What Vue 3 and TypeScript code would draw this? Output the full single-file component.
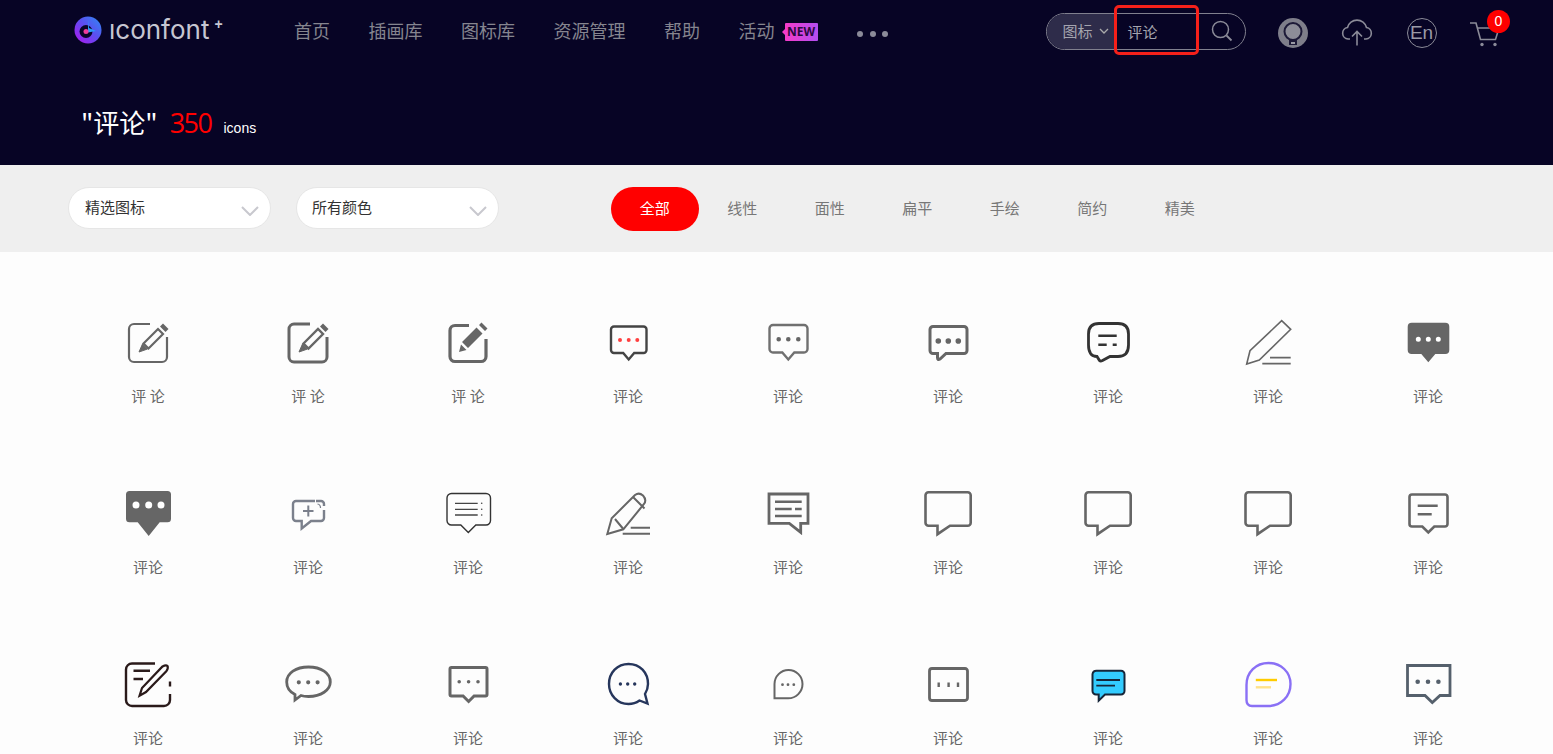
<script setup lang="ts">
interface Shape {
  d: string
  s?: string
  w?: number
  f?: string
}
interface Icon {
  label?: string
  shapes: Shape[]
}

const navItems = ['首页', '插画库', '图标库', '资源管理', '帮助']
const tabs = ['全部', '线性', '面性', '扁平', '手绘', '简约', '精美']

function dot(x: number, y: number, r: number) {
  return `M${x - r} ${y}a${r} ${r} 0 1 0 ${r * 2} 0a${r} ${r} 0 1 0 ${-r * 2} 0Z`
}
function dots(xs: number[], y: number, r: number, f: string): Shape {
  return { d: xs.map((x) => dot(x, y, r)).join(''), f, s: 'none', w: 0 }
}
function bubble(x1: number, y1: number, x2: number, y2: number, r: number, tx: number, tw: number, ty: number) {
  return `M${x1 + r} ${y1}H${x2 - r}a${r} ${r} 0 0 1 ${r} ${r}V${y2 - r}a${r} ${r} 0 0 1 ${-r} ${r}H${tx + tw}L${tx} ${ty}L${tx - tw} ${y2}H${x1 + r}a${r} ${r} 0 0 1 ${-r} ${-r}V${y1 + r}a${r} ${r} 0 0 1 ${r} ${-r}Z`
}
// tail sits on the left, pointing straight down
function speech(x1: number, x2: number, y1: number, y2: number) {
  const r = 3
  return `M${x1 + r} ${y1}H${x2 - r}a${r} ${r} 0 0 1 ${r} ${r}V${y2 - r}a${r} ${r} 0 0 1 ${-r} ${r}H32L${x1 + 12} ${y2 + 8.5}V${y2}H${x1 + r}a${r} ${r} 0 0 1 ${-r} ${-r}V${y1 + r}a${r} ${r} 0 0 1 ${r} ${-r}Z`
}
const frame = 'M32 11H16a5 5 0 0 0-5 5v28a5 5 0 0 0 5 5h28a5 5 0 0 0 5-5V24'
const cap = 'M42 13.500L45 10.500l5.500 5.500-3 3Z'

const icons: Icon[] = [
  { label: '评 论', shapes: [
    { d: frame, w: 2.200 },
    { d: 'M25.500 30.500L40 16l5 5-14.500 14.500Z', w: 2.200 },
    { d: 'M21 39l3.500-8 5 5Z', f: '#666', w: 1 },
    { d: cap, f: '#666', w: 0 },
  ] },
  { label: '评 论', shapes: [
    { d: frame, w: 3 },
    { d: 'M25.500 30.500L40 16l5 5-14.500 14.500Z', w: 2.400 },
    { d: 'M21 39l3.500-8 5 5Z', f: '#666', w: 1 },
    { d: cap, f: '#666', w: 0 },
  ] },
  { label: '评 论', shapes: [
    { d: 'M31 12.500H17a5 5 0 0 0-5 5v26a5 5 0 0 0 5 5h26a5 5 0 0 0 5-5V26', w: 3.200 },
    { d: 'M24 29L38.500 14.500l6 6L30 35ZM21 39l2-7.500 5.500 5.500ZM41 12l2.500-2.500 6 6-2.500 2.500Z', f: '#666', w: 0 },
  ] },
  { shapes: [
    { d: bubble(13, 13.500, 48.500, 40, 3, 30.700, 5.500, 46.500), s: '#444', w: 2.400 },
    dots([22, 30.700, 39.300], 27, 2, '#ff4040'),
  ] },
  { shapes: [
    { d: bubble(11.500, 12, 49.500, 39.500, 3.500, 30.300, 6, 46.500), s: '#707070', w: 2.400 },
    dots([20.700, 30.300, 40.300], 26.300, 2.300, '#666'),
  ] },
  { shapes: [
    { d: 'M15 13.500H46a3 3 0 0 1 3 3V37.500a3 3 0 0 1-3 3H28l-6 5.500q-2.500 1.500-2.500-1.500V40.500H15a3 3 0 0 1-3-3V16.500a3 3 0 0 1 3-3Z', w: 3 },
    dots([20.300, 30.300, 40.300], 28, 2.800, '#666'),
  ] },
  { shapes: [
    { d: 'M21 10.500H40C47 10.500 50.500 14 50.500 21V32C50.500 40 47 43.500 40 43.500H32L24.500 47.500Q22.500 48.500 21.500 47.500L19 43.500C13 43.500 10.500 39 10.500 32V21C10.500 14 14 10.500 21 10.500Z', s: '#333', w: 2.800 },
    { d: 'M20.300 22.700H38.700M20.300 31.700H28.700M34.700 31.700H38.700', s: '#333', w: 2.600 },
  ] },
  { shapes: [
    { d: 'M8.700 51L12 37.700L43.700 7.700L52.700 16.300L21.300 47Z', w: 1.600 },
    { d: 'M32 44.700H52.700M24.300 50.700H52.700', w: 1.800 },
  ] },
  { shapes: [
    { d: bubble(9.700, 9.700, 51.300, 41, 4, 30.300, 7, 49.300), f: '#666', w: 0 },
    dots([20.300, 30.300, 40.300], 26.300, 2.500, '#fff'),
  ] },

  { shapes: [
    { d: bubble(8, 7, 53, 38.300, 3.500, 30.700, 11, 52), f: '#666', w: 0 },
    dots([18, 30.700, 43], 21, 3.500, '#fff'),
  ] },
  { shapes: [
    { d: 'M37 17H18a3 3 0 0 0-3 3V34a3 3 0 0 0 3 3H23.700V44.500L33 37H43a3 3 0 0 0 3-3V26', s: '#7b808c', w: 2.400 },
    { d: 'M38 17H43a3 3 0 0 1 3 3V22', s: '#7b808c', w: 2.400 },
    { d: 'M25 27H35.500M30.300 21.500V32.500', s: '#7b808c', w: 2 },
    { d: 'M39.500 20Q42.500 20.500 42.500 24', s: '#7b808c', w: 1.200 },
  ] },
  { shapes: [
    { d: bubble(9, 9.500, 52.500, 41, 4.500, 30.300, 7.500, 48.500), s: '#333', w: 1.400 },
    { d: 'M17 19.300H39.700M17 25.300H39.700M17 31H39.700', s: '#444', w: 1.300 },
    dots([43.700], 19.300, 0.800, '#444'),
    dots([43.700], 25.300, 0.800, '#444'),
    dots([43.700], 31, 0.800, '#444'),
  ] },
  { shapes: [
    { d: 'M9.300 50L13.700 34.300L37 11Q41 8 45 11.500Q49 16 46 20L25.300 45.300Z', w: 2 },
    { d: 'M17 35L25.300 45M35 13L46.500 24.500', w: 2 },
    { d: 'M32.700 43.700H52M24.700 49.700H52', w: 2 },
  ] },
  { shapes: [
    { d: 'M11 10H50V39.300H42.700V48.300L31.300 39.300H11Z', w: 2.800 },
    { d: 'M17 17.700H43.700M17 25H33.700M37 25H43.700M17 32H43.700', w: 2.600 },
  ] },
  { shapes: [{ d: speech(7.500, 52.700, 8.300, 41.700), w: 2.600 }] },
  { shapes: [{ d: speech(7.500, 52.700, 8.300, 41.700), w: 2.600 }] },
  { shapes: [{ d: speech(7.500, 52.700, 8.300, 41.700), w: 2.600 }] },
  { shapes: [
    { d: bubble(11.500, 10.500, 49.500, 42.500, 2.500, 30.300, 6, 48.500), w: 2.600 },
    { d: 'M19.700 21.700H39.700M19.700 30.300H33.700', w: 2.600 },
  ] },

  { shapes: [
    { d: 'M37 8.500H14a6 6 0 0 0-6 6V45a6 6 0 0 0 6 6H46a6 6 0 0 0 6-6V39M52 31.500V26.500', s: '#2a1a1a', w: 2.400 },
    { d: 'M15.500 15.700H32M15.500 24H25', s: '#2a1a1a', w: 2.400 },
    { d: 'M21.600 40.700L24 33L44.500 11.500Q48 9.500 49.500 11Q50.500 13 48.500 16L28 37Z', s: '#2a1a1a', w: 2.200 },
  ] },
  { shapes: [
    { d: 'M17 39.500C11 36.500 8.700 32 8.700 27C8.700 18 18 12 30.500 12C43 12 52.300 18 52.300 27C52.300 35 43 41.500 30.500 41.500C27.500 41.500 25 41.200 23 40.500L17 45Z', w: 2.800 },
    dots([20.800, 30.200, 39.600], 27.300, 2.100, '#666'),
  ] },
  { shapes: [
    { d: bubble(12, 12.500, 49, 41, 1.500, 30.600, 5.500, 46.500), w: 3 },
    dots([21.200, 30.600, 40], 26.700, 1.800, '#666'),
  ] },
  { shapes: [
    { d: 'M30.500 9C42 9 50 17.500 50 29C50 33.500 48.500 36.500 47 39L49.500 48.500L41.500 45.500C38 48 34.500 49 30.500 49C19.500 49 11 40 11 29C11 17.500 19.500 9 30.500 9Z', s: '#26365c', w: 2.400 },
    dots([22.400, 29.700, 36.700], 29, 1.700, '#26365c'),
  ] },
  { shapes: [
    { d: 'M16.500 43.300V29a14 14 0 0 1 28 0a14.300 14.300 0 0 1-14.300 14.300Z', w: 2 },
    dots([24.500, 30, 35.800], 29.700, 1.400, '#666'),
  ] },
  { shapes: [
    { d: 'M14 13.500H47a2.500 2.500 0 0 1 2.500 2.500V43a2.500 2.500 0 0 1-2.500 2.500H14a2.500 2.500 0 0 1-2.500-2.500V16a2.500 2.500 0 0 1 2.500-2.500Z', w: 2.800 },
    { d: 'M20.700 27.500V32M30.600 27.500V32M40 27.500V32', w: 2.400 },
  ] },
  { shapes: [
    { d: 'M18.500 15.700H43a3.500 3.500 0 0 1 3.500 3.500V36a3.500 3.500 0 0 1-3.500 3.500H27L20.700 45.700V39.500H18a3.500 3.500 0 0 1-3.500-3.500V19.200a4 4 0 0 1 4-3.500Z', f: '#33ccff', s: '#16263a', w: 2 },
    { d: 'M18.300 25H42M18.300 30.700H37', s: '#16263a', w: 1.800 },
  ] },
  { shapes: [
    { d: 'M30.500 8C43 8 52.500 17 52.500 29C52.500 41.500 43 51 30 51H14C10 51 8.500 48.500 8.500 45V30C8.500 17 18 8 30.500 8Z', s: '#8a70f5', w: 2.400 },
    { d: 'M17.800 25H39', s: '#ffcc00', w: 2.400 },
    { d: 'M17.800 32.300H33', s: '#ffe28a', w: 2.400 },
  ] },
  { shapes: [
    { d: 'M9.500 10.500H52V40.500H42L34.300 47.500L27 40.500H9.500Z', s: '#55606c', w: 2.800 },
    dots([19.700, 30, 40.400], 26.700, 2.300, '#55606c'),
  ] },
]
</script>

<template>
  <div class="page">
    <header class="header">
      <div class="top">
        <div class="logo">
          <svg class="logo-mark" viewBox="0 0 28 28" width="28" height="28">
            <defs>
              <linearGradient id="lg" x1="0" y1="1" x2="1" y2="0">
                <stop offset="0" stop-color="#b414f0" />
                <stop offset="0.550" stop-color="#5a50f0" />
                <stop offset="1" stop-color="#2d8cf5" />
              </linearGradient>
            </defs>
            <circle cx="14" cy="14" r="13.500" fill="url(#lg)" />
            <circle cx="12" cy="15.500" r="6.500" fill="#0a0628" />
            <path d="M14 4l1 8 7 3-8 1.500Z" fill="#2d9cf8" />
            <circle cx="12" cy="15.500" r="2.500" fill="#ee3c9c" />
          </svg>
          <span class="logo-text">ıconfont</span>
          <span class="logo-plus">+</span>
        </div>
        <nav class="nav">
          <a v-for="item in navItems" :key="item">{{ item }}</a>
          <a class="has-badge">活动<span class="new-badge">NEW</span></a>
          <span class="more"><i></i><i></i><i></i></span>
        </nav>
        <div class="search">
          <div class="search-type">
            图标
            <svg viewBox="0 0 10 6" width="10" height="6"><path d="M1 1l4 4 4-4" fill="none" stroke="#aaa" stroke-width="1.300" /></svg>
          </div>
          <div class="search-input">评论</div>
          <svg class="search-icon" viewBox="0 0 22 22" width="22" height="22">
            <circle cx="9.500" cy="9.500" r="8" fill="none" stroke="#8b8b98" stroke-width="1.500" />
            <path d="M15.500 15.500l5 5" stroke="#8b8b98" stroke-width="1.800" />
          </svg>
          <div class="highlight"></div>
        </div>
        <div class="tools">
          <svg viewBox="0 0 30 30" width="30" height="30">
            <circle cx="15" cy="15" r="15" fill="#7e7e8a" />
            <circle cx="15" cy="13.500" r="8.500" fill="#8d8d98" stroke="#1d1a38" stroke-width="2" />
            <path d="M11 22h8v5h-8Z" fill="#1d1a38" />
            <path d="M13 24h4v2h-4Z" fill="#9a9aa4" />
          </svg>
          <svg viewBox="0 0 32 27" width="32" height="27">
            <path d="M9 20H7a5.800 5.800 0 0 1-.5-11.500a9.800 9.800 0 0 1 19 0a5.800 5.800 0 0 1 -.5 11.500H23" fill="none" stroke="#8b8b98" stroke-width="1.600" />
            <path d="M16 26.500V12.500M11 17.500l5-5 5 5" fill="none" stroke="#8b8b98" stroke-width="1.600" />
          </svg>
          <div class="lang">En</div>
          <div class="cart">
            <svg viewBox="0 0 30 26" width="30" height="26">
              <path d="M0 2h6l4.500 16.500h15L29 7H8" fill="none" stroke="#8b8b98" stroke-width="1.600" />
              <circle cx="12" cy="23.500" r="1.700" fill="#8b8b98" />
              <circle cx="25" cy="23.500" r="1.700" fill="#8b8b98" />
            </svg>
            <span class="cart-count">0</span>
          </div>
        </div>
      </div>
      <div class="title">
        <span class="query">"评论"</span>
        <span class="count">350</span>
        <span class="unit">icons</span>
      </div>
    </header>

    <section class="filters">
      <div class="select">
        <span>精选图标</span>
        <svg viewBox="0 0 18 10" width="18" height="10"><path d="M1 1l8 8 8-8" fill="none" stroke="#c8c8ce" stroke-width="2" /></svg>
      </div>
      <div class="select second">
        <span>所有颜色</span>
        <svg viewBox="0 0 18 10" width="18" height="10"><path d="M1 1l8 8 8-8" fill="none" stroke="#c8c8ce" stroke-width="2" /></svg>
      </div>
      <div class="tabs">
        <span v-for="(t, i) in tabs" :key="t" class="tab" :class="{ active: i === 0 }">{{ t }}</span>
      </div>
    </section>

    <main class="grid">
      <div v-for="(icon, i) in icons" :key="i" class="cell">
        <svg viewBox="0 0 60 60" width="60" height="60">
          <path
            v-for="(p, j) in icon.shapes"
            :key="j"
            :d="p.d"
            :fill="p.f || 'none'"
            :stroke="p.s || '#666'"
            :stroke-width="p.w ?? 2"
          />
        </svg>
        <div class="label">{{ icon.label || '评论' }}</div>
      </div>
    </main>
  </div>
</template>

<style scoped>
.page {
  height: 754px;
  overflow: hidden;
  background: #fdfdfd;
  font-family: "Noto Sans CJK SC", "Liberation Sans", sans-serif;
}
.header {
  height: 165px;
  background: #070425;
}
.top {
  display: flex;
  align-items: flex-start;
  height: 102px;
  padding-top: 13px;
  box-sizing: border-box;
}
.logo {
  width: 294px;
  flex: none;
  display: flex;
  align-items: center;
  height: 34px;
  padding-left: 74px;
  box-sizing: border-box;
}
.logo-mark {
  flex: none;
}
.logo-text {
  margin-left: 7px;
  font-family: Inter, "Liberation Sans", sans-serif;
  font-size: 26px;
  color: #c6c6d2;
  line-height: 34px;
}
.logo-plus {
  margin: -12px 0 0 5px;
  font: bold 14px "Liberation Sans", sans-serif;
  color: #c6c6d2;
}
.nav {
  flex: 1;
  display: flex;
  align-items: center;
  gap: 38.500px;
  height: 34px;
  font-size: 18px;
  color: #85858f;
}
.has-badge {
  display: flex;
  align-items: center;
}
.new-badge {
  position: relative;
  margin: 4px 0 0 10px;
  width: 33px;
  height: 18px;
  background: linear-gradient(90deg, #f53bc9, #b24ef0);
  border-radius: 1px;
  font: bold 12px/18px "Noto Sans", sans-serif;
  color: #2a0a40;
  text-align: center;
}
.new-badge::before {
  content: "";
  position: absolute;
  left: -3px;
  top: 6px;
  border: 3px solid transparent;
  border-left: 0;
  border-right-color: #f53bc9;
}
.more {
  display: flex;
  gap: 6.500px;
  margin: 8px 0 0 1px;
}
.more i {
  width: 6px;
  height: 6px;
  border-radius: 50%;
  background: #8b8b99;
}
.search {
  position: relative;
  flex: none;
  display: flex;
  align-items: center;
  width: 200px;
  height: 37px;
  border: 1px solid #80808e;
  border-radius: 19px;
  box-sizing: border-box;
}
.search-type {
  display: flex;
  align-items: center;
  gap: 6px;
  width: 69px;
  height: 100%;
  padding: 0 0 2px 16px;
  box-sizing: border-box;
  background: #2e2c4a;
  border-radius: 18px 0 0 18px;
  font-size: 15px;
  color: #a4a4ae;
}
.search-input {
  margin: -1px 0 0 12px;
  font-size: 15px;
  color: #a4a4ae;
}
.search-icon {
  position: absolute;
  right: 12px;
  top: 6px;
}
.highlight {
  position: absolute;
  left: 67px;
  top: -9px;
  width: 85px;
  height: 50px;
  border: 3px solid #f5201a;
  border-radius: 5px;
  box-sizing: border-box;
}
.tools {
  flex: none;
  display: flex;
  align-items: center;
  gap: 33.500px;
  height: 37px;
  margin: 1px 53px 0 32px;
}
.lang {
  width: 30px;
  height: 30px;
  border: 1.500px solid #8b8b98;
  border-radius: 50%;
  box-sizing: border-box;
  font: 19px/27px "Liberation Sans", sans-serif;
  color: #9a9aa6;
  text-align: center;
}
.cart {
  position: relative;
  width: 30px;
  height: 26px;
  margin-top: 3px;
}
.cart-count {
  position: absolute;
  left: 17px;
  top: -11px;
  width: 23px;
  height: 23px;
  border-radius: 50%;
  background: #ff0000;
  color: #fff;
  font: 14px/23px "Liberation Sans", sans-serif;
  text-align: center;
}
.title {
  display: flex;
  align-items: baseline;
  padding-left: 81px;
  line-height: 40px;
  color: #fff;
}
.query {
  font-size: 26px;
}
.count {
  margin-left: 12px;
  font: 27px "Open Sans", sans-serif;
  letter-spacing: -1.500px;
  color: #ff0000;
}
.unit {
  margin-left: 12px;
  font: 14px "Liberation Sans", sans-serif;
}
.filters {
  display: flex;
  align-items: flex-start;
  height: 87px;
  padding: 22px 0 0 68px;
  box-sizing: border-box;
  background: #efefef;
}
.select {
  display: flex;
  align-items: center;
  justify-content: space-between;
  width: 203px;
  height: 42px;
  padding: 0 11px 0 16px;
  box-sizing: border-box;
  background: #fff;
  border: 1px solid #e6e6e6;
  border-radius: 21px;
  font-size: 15px;
  color: #333;
}
.select span {
  margin-top: -3px;
}
.select svg {
  margin-top: 5px;
}
.second {
  margin-left: 25px;
  padding-left: 15px;
}
.tabs {
  display: flex;
  margin-left: 112px;
}
.tab {
  width: 87.500px;
  height: 44px;
  line-height: 42px;
  text-align: center;
  font-size: 15px;
  color: #777;
}
.tab.active {
  background: #ff0000;
  border-radius: 22px;
  color: #fff;
}
.grid {
  display: grid;
  grid-template-columns: repeat(9, 160px);
  grid-auto-rows: 171px;
  padding: 61px 0 0 68px;
}
.cell {
  display: flex;
  flex-direction: column;
  align-items: center;
}
.label {
  margin-top: 13px;
  line-height: 20px;
  font-size: 15px;
  color: #666;
}
</style>

<style>
html, body {
  margin: 0;
  overflow: hidden;
}
</style>
